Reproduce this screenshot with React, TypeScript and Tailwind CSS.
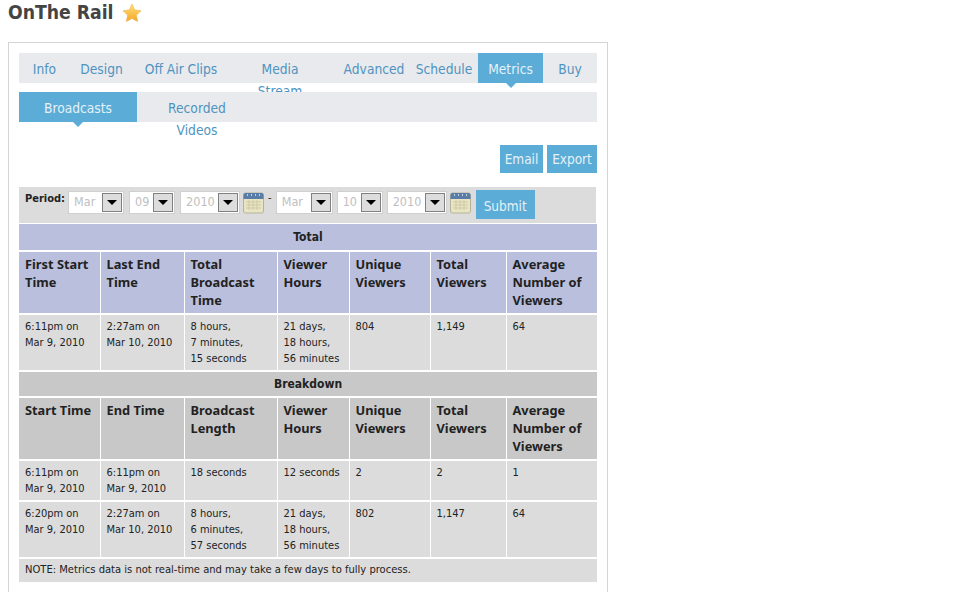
const tabs = [
  { label: 'Info', w: 'w-[51px]' },
  { label: 'Design', w: 'w-[63px]' },
  { label: 'Off Air Clips', w: 'w-[96px]' },
  { label: 'Media Stream', w: 'w-[102px] px-[25px]' },
  { label: 'Advanced', w: 'w-[86px] whitespace-nowrap' },
  { label: 'Schedule', w: 'w-[54px] whitespace-nowrap flex justify-center' },
  { label: 'Metrics', w: 'w-[65px] ml-[7px]', active: true },
  { label: 'Buy', w: 'w-[54px]' },
];

const colWidths = ['w-[81px]', 'w-[84px]', 'w-[93px]', 'w-[72px]', 'w-[81px]', 'w-[76px]', 'w-[91px]'];

const totalHead = ['First Start Time', 'Last End Time', 'Total Broadcast Time', 'Viewer Hours', 'Unique Viewers', 'Total Viewers', 'Average Number of Viewers'];
const breakdownHead = ['Start Time', 'End Time', 'Broadcast Length', 'Viewer Hours', 'Unique Viewers', 'Total Viewers', 'Average Number of Viewers'];

const totalRow = [
  ['6:11pm on', 'Mar 9, 2010'],
  ['2:27am on', 'Mar 10, 2010'],
  ['8 hours,', '7 minutes,', '15 seconds'],
  ['21 days,', '18 hours,', '56 minutes'],
  ['804'],
  ['1,149'],
  ['64'],
];
const breakdownRows = [
  [['6:11pm on', 'Mar 9, 2010'], ['6:11pm on', 'Mar 9, 2010'], ['18 seconds'], ['12 seconds'], ['2'], ['2'], ['1']],
  [['6:20pm on', 'Mar 9, 2010'], ['2:27am on', 'Mar 10, 2010'], ['8 hours,', '6 minutes,', '57 seconds'], ['21 days,', '18 hours,', '56 minutes'], ['802'], ['1,147'], ['64']],
];

function Star() {
  return (
    <svg width="20" height="20" viewBox="0 0 20 20">
      <defs>
        <linearGradient id="star" x1="0" y1="0" x2="0" y2="1">
          <stop offset="0" stopColor="#ffe27a" />
          <stop offset="1" stopColor="#f5a623" />
        </linearGradient>
      </defs>
      <path d="M10 1l2.7 5.9 6.3.8-4.6 4.4 1.2 6.4L10 15.4l-5.6 3.1 1.2-6.4L1 7.7l6.3-.8z" fill="url(#star)" stroke="#eeb04a" strokeWidth="0.6" />
    </svg>
  );
}

function CalendarIcon() {
  return (
    <svg width="21" height="22" viewBox="0 0 21 22" className="shrink-0">
      <rect x="0.5" y="1" width="20" height="20" rx="2" fill="#e8e4c4" stroke="#b4b39a" />
      <path d="M0.5 3a2 2 0 0 1 2-2h16a2 2 0 0 1 2 2v4h-20z" fill="#5a7da8" />
      <path d="M4 3h1M8 3h1M12 3h1M16 3h1" stroke="#e4e9f0" strokeWidth="1.4" />
      <path d="M3 10h15M3 13h15M3 16h15M6 8v10M10 8v10M14 8v10" stroke="#cfcba6" strokeWidth="1" />
    </svg>
  );
}

function FakeSelect({ value, w }: { value: string; w: string }) {
  return (
    <div className={`${w} h-[23px] bg-white border border-[#d0d0d0] flex items-center justify-between pl-[5px] pr-[1px]`}>
      <span className="text-[#c0c0c0] text-[12.5px]">{value}</span>
      <div className="w-[20px] h-[19px] bg-[#dddddd] border border-[#808080] flex items-center justify-center">
        <div className="w-0 h-0 border-x-[5px] border-x-transparent border-t-[5px] border-t-black" />
      </div>
    </div>
  );
}

function Lines({ lines }: { lines: string[] }) {
  return (
    <>
      {lines.map((l) => (
        <div key={l}>{l}</div>
      ))}
    </>
  );
}

function HeadRow({ cells, bg, h }: { cells: string[]; bg: string; h: string }) {
  return (
    <tr className={h}>
      {cells.map((c) => (
        <th key={c} className={`${bg} border-y-2 border-x border-white first:border-l-0 last:border-r-0 pl-[6px] pr-[2px] pt-[3px] align-top text-left font-bold font-['Noto_Sans',sans-serif] font-stretch-normal text-[12.8px] leading-[18px] text-[#222]`}>
          {c}
        </th>
      ))}
    </tr>
  );
}

function BodyRow({ cells, h }: { cells: string[][]; h: string }) {
  return (
    <tr className={h}>
      {cells.map((c, i) => (
        <td key={i} className="bg-[#dcdcdc] border-y-2 border-x border-white first:border-l-0 last:border-r-0 px-[6px] pt-[4px] align-top text-[11px] leading-[16px] text-[#222]">
          <Lines lines={c} />
        </td>
      ))}
    </tr>
  );
}

export default function App() {
  return (
    <div className="w-[959px] h-[592px] overflow-hidden bg-white pl-[8px] font-['DejaVu_Sans',sans-serif] font-stretch-condensed">
      <div className="flex items-center gap-[8px] h-[26px] text-[#444] text-[19.2px] font-bold">
        OnThe Rail
        <Star />
      </div>

      <div className="mt-[16px] w-[600px] h-[560px] border border-[#d4d4d4] border-b-0 px-[10px] pt-[10px]">
        <div className="flex h-[30px] bg-[#e9eaee] text-[#4f94bf] text-[13.7px]">
          {tabs.map((t) => (
            <div key={t.label} className={`${t.w} relative pt-[5px] text-center leading-[22px] ${t.active ? 'bg-[#5bacd6] text-[#e4f1f8]' : ''}`}>
              {t.label}
              {t.active && <div className="absolute left-1/2 -translate-x-1/2 top-full w-0 h-0 border-x-[5px] border-x-transparent border-t-[5px] border-t-[#5bacd6]" />}
            </div>
          ))}
        </div>

        <div className="relative mt-[9px] flex h-[30px] bg-[#e9eaee] text-[13.7px] text-[#4f94bf]">
          <div className="w-[118px] relative bg-[#5bacd6] text-[#e4f1f8] text-center pt-[5px] leading-[22px]">
            Broadcasts
            <div className="absolute left-1/2 -translate-x-1/2 top-full w-0 h-0 border-x-[5px] border-x-transparent border-t-[5px] border-t-[#5bacd6]" />
          </div>
          <div className="w-[120px] text-center pt-[5px] leading-[22px]">Recorded<br />Videos</div>
        </div>

        <div className="mt-[23px] flex justify-end gap-[4px] text-[13.5px] text-[#e4f1f8]">
          <div className="w-[43px] h-[28px] bg-[#5bacd6] flex items-center justify-center">Email</div>
          <div className="w-[50px] h-[28px] bg-[#5bacd6] flex items-center justify-center">Export</div>
        </div>

        <div className="mt-[14px] h-[36px] w-[577px] bg-[#dcdcdc] flex items-start pl-[6px] pt-[3px]">
          <span className="text-[11px] font-bold text-[#222] mt-[1px] mr-[3px]">Period:</span>
          <div className="flex items-center gap-[5px] mt-[1px]">
            <FakeSelect value="Mar" w="w-[56px]" />
            <FakeSelect value="09" w="w-[46px]" />
            <FakeSelect value="2010" w="w-[60px]" />
          </div>
          <div className="mt-[2px] ml-[3px]"><CalendarIcon /></div>
          <span className="text-[11px] text-[#222] ml-[4px] mr-[4px]">-</span>
          <div className="flex items-center gap-[4px] mt-[1px]">
            <FakeSelect value="Mar" w="w-[57px]" />
            <FakeSelect value="10" w="w-[46px]" />
            <FakeSelect value="2010" w="w-[60px]" />
          </div>
          <div className="mt-[2px] ml-[3px]"><CalendarIcon /></div>
          <div className="ml-[5px] w-[59px] h-[29px] bg-[#5bacd6] text-[#e4f1f8] text-[13.5px] flex items-center justify-center pt-[3px]">Submit</div>
        </div>

        <table className="w-[578px] table-fixed border-collapse">
          <colgroup>
            {colWidths.map((w) => (
              <col key={w} className={w} />
            ))}
          </colgroup>
          <tbody>
            <tr className="h-[27px]">
              <td colSpan={7} className="bg-[#babfdd] text-center font-bold text-[12px] text-[#222] border-t border-b-2 border-white">Total</td>
            </tr>
            <HeadRow cells={totalHead} bg="bg-[#babfdd]" h="h-[63px]" />
            <BodyRow cells={totalRow} h="h-[57px]" />
            <tr className="h-[26px]">
              <td colSpan={7} className="bg-[#c8c8c8] text-center font-bold text-[12px] text-[#222] border-y-2 border-white">Breakdown</td>
            </tr>
            <HeadRow cells={breakdownHead} bg="bg-[#c8c8c8]" h="h-[63px]" />
            <BodyRow cells={breakdownRows[0]} h="h-[41px]" />
            <BodyRow cells={breakdownRows[1]} h="h-[57px]" />
            <tr className="h-[24px]">
              <td colSpan={7} className="bg-[#dcdcdc] px-[6px] text-[11.1px] text-[#222] border-t-2 border-white">NOTE: Metrics data is not real-time and may take a few days to fully process.</td>
            </tr>
          </tbody>
        </table>
      </div>
    </div>
  );
}
